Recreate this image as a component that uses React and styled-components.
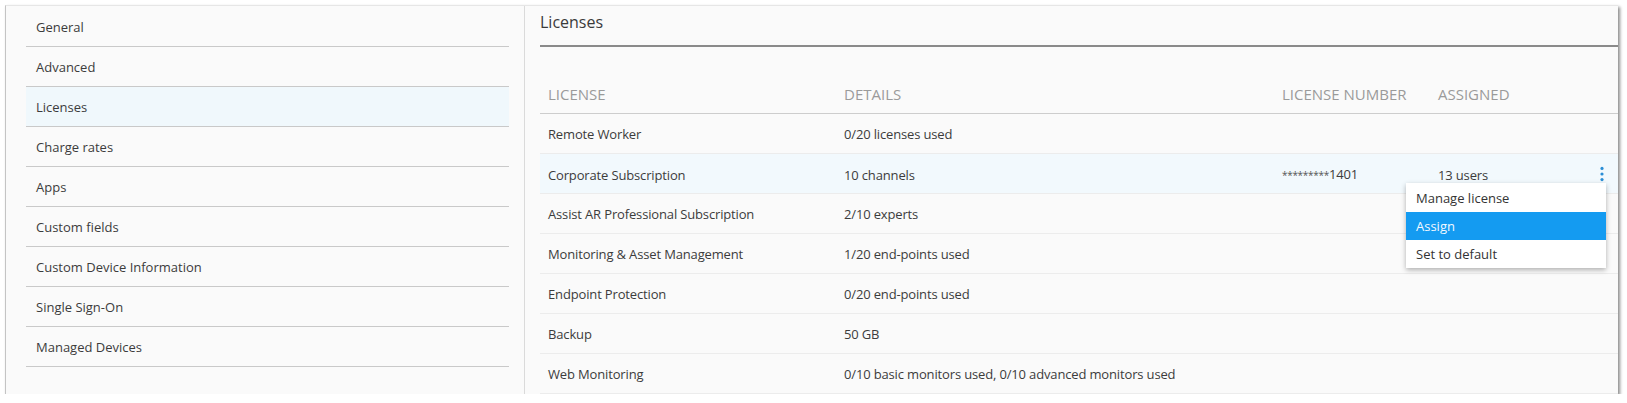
import React from "react";
import styled, { createGlobalStyle } from "styled-components";

const Global = createGlobalStyle`
  html, body { margin: 0; padding: 0; background: #ffffff; }
  body { font-family: "Open Sans", "Noto Sans", "Liberation Sans", sans-serif; color: #3c3c3c; }
  * { box-sizing: border-box; }
`;

const Window = styled.div`
  display: flex;
  width: 1613px;
  height: 389px;
  margin: 5px 0 0 5px;
  background: #fafafa;
  border-left: 1px solid #c4c4c4;
  border-top: 1px solid #e6e6e6;
  box-shadow: 2px 2px 3px rgba(0, 0, 0, 0.45);
  overflow: hidden;
`;

const Sidebar = styled.nav`
  width: 519px;
  flex: none;
  padding: 1px 15px 0 20px;
  border-right: 1px solid #dadada;
`;

const NavItem = styled.div`
  height: 40px;
  padding: 2px 0 0 10px;
  line-height: 37px;
  font-size: 13px;
  color: #3c3c3c;
  border-bottom: 1px solid #c9c9c9;
  background: ${(p) => (p.$active ? "#f0f8fc" : "transparent")};
`;

const Main = styled.main`
  flex: 1;
  min-width: 0;
  padding-left: 15px;
  display: flex;
  flex-direction: column;
`;

const Title = styled.h1`
  margin: 0;
  height: 41px;
  padding-top: 5px;
  font-size: 16px;
  line-height: 22px;
  font-weight: 400;
  color: #3a3a3a;
  border-bottom: 2px solid #8a8a8a;
`;

const Grid = styled.div`
  display: grid;
  grid-template-columns: 296px 438px 156px 1fr 32px;
  align-items: center;
`;

const HeaderRow = styled(Grid)`
  height: 67px;
  align-items: end;
  padding-bottom: 9px;
  border-bottom: 1px solid #cdcdcd;
`;

const HeadCell = styled.div`
  padding-left: 8px;
  font-size: 15px;
  line-height: 20px;
  color: #9a9a9a;
  white-space: nowrap;
`;

const Row = styled(Grid)`
  position: relative;
  height: 40px;
  border-bottom: 1px solid #ececec;
  background: ${(p) => (p.$active ? "#f2f9fd" : "transparent")};
`;

const Cell = styled.div`
  padding: 2px 0 0 8px;
  font-size: 13px;
  line-height: 37px;
  letter-spacing: -0.15px;
  color: #3c3c3c;
  white-space: nowrap;
`;

const Masked = styled.span`
  font-size: 10px;
  letter-spacing: -0.3px;
  color: #555;
`;

const KebabButton = styled.button`
  justify-self: center;
  width: 16px;
  height: 20px;
  padding: 0;
  border: 0;
  background: transparent;
  display: flex;
  align-items: center;
  justify-content: center;
  cursor: pointer;
`;

const Menu = styled.ul`
  position: absolute;
  right: 12px;
  top: 29px;
  width: 200px;
  margin: 0;
  padding: 1px 0 0;
  list-style: none;
  background: #ffffff;
  box-shadow: 0 2px 5px rgba(0, 0, 0, 0.3);
  z-index: 2;
`;

const MenuItem = styled.li`
  height: 28px;
  line-height: 28px;
  padding-left: 10px;
  font-size: 13px;
  color: ${(p) => (p.$active ? "#f2f8ff" : "#333333")};
  background: ${(p) => (p.$active ? "#149bf1" : "transparent")};
`;

const Kebab = () => (
  <svg width="4" height="16" viewBox="0 0 4 16">
    <circle cx="2" cy="2.4" r="1.6" fill="#2b8ed6" />
    <circle cx="2" cy="8" r="1.6" fill="#2b8ed6" />
    <circle cx="2" cy="13.6" r="1.6" fill="#2b8ed6" />
  </svg>
);

const nav = [
  "General",
  "Advanced",
  "Licenses",
  "Charge rates",
  "Apps",
  "Custom fields",
  "Custom Device Information",
  "Single Sign-On",
  "Managed Devices",
];

const licenses = [
  { name: "Remote Worker", details: "0/20 licenses used" },
  { name: "Corporate Subscription", details: "10 channels", number: "1401", assigned: "13 users", active: true },
  { name: "Assist AR Professional Subscription", details: "2/10 experts" },
  { name: "Monitoring & Asset Management", details: "1/20 end-points used" },
  { name: "Endpoint Protection", details: "0/20 end-points used" },
  { name: "Backup", details: "50 GB" },
  { name: "Web Monitoring", details: "0/10 basic monitors used, 0/10 advanced monitors used" },
];

export default function App() {
  return (
    <>
      <Global />
      <Window>
        <Sidebar>
          {nav.map((n) => (
            <NavItem key={n} $active={n === "Licenses"}>
              {n}
            </NavItem>
          ))}
        </Sidebar>
        <Main>
          <Title>Licenses</Title>
          <HeaderRow>
            <HeadCell>LICENSE</HeadCell>
            <HeadCell>DETAILS</HeadCell>
            <HeadCell>LICENSE NUMBER</HeadCell>
            <HeadCell>ASSIGNED</HeadCell>
            <div />
          </HeaderRow>
          {licenses.map((l) => (
            <Row key={l.name} $active={l.active}>
              <Cell>{l.name}</Cell>
              <Cell>{l.details}</Cell>
              <Cell>
                {l.number && (
                  <>
                    <Masked>*********</Masked>
                    {l.number}
                  </>
                )}
              </Cell>
              <Cell>{l.assigned}</Cell>
              {l.active ? (
                <KebabButton aria-label="More">
                  <Kebab />
                </KebabButton>
              ) : (
                <div />
              )}
              {l.active && (
                <Menu>
                  <MenuItem>Manage license</MenuItem>
                  <MenuItem $active>Assign</MenuItem>
                  <MenuItem>Set to default</MenuItem>
                </Menu>
              )}
            </Row>
          ))}
        </Main>
      </Window>
    </>
  );
}
